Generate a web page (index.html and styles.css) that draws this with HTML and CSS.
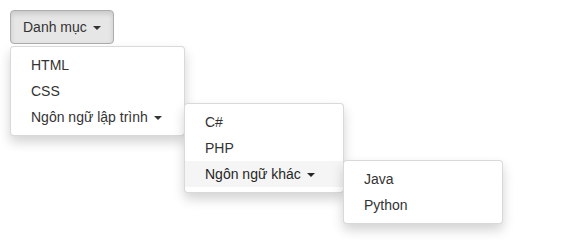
FILE: index.html
```html
<!DOCTYPE html>
<html lang="vi">
<head>
<meta charset="utf-8">
<title>Dropdown</title>
<link rel="stylesheet" href="styles.css">
</head>
<body>
<div class="page">
  <div class="dropdown">
    <button class="btn" type="button">Danh mục <span class="caret"></span></button>
    <ul class="menu menu-root">
      <li><a class="item">HTML</a></li>
      <li><a class="item">CSS</a></li>
      <li class="submenu">
        <a class="item">Ngôn ngữ lập trình <span class="caret"></span></a>
        <ul class="menu menu-sub">
          <li><a class="item">C#</a></li>
          <li><a class="item">PHP</a></li>
          <li class="submenu">
            <a class="item hover">Ngôn ngữ khác <span class="caret"></span></a>
            <ul class="menu menu-sub">
              <li><a class="item">Java</a></li>
              <li><a class="item">Python</a></li>
            </ul>
          </li>
        </ul>
      </li>
    </ul>
  </div>
</div>
</body>
</html>
```
FILE: styles.css
```css
* { box-sizing: border-box; }
html, body {
  margin: 0;
  background: #fff;
  font-family: "Liberation Sans", Arial, sans-serif;
  font-size: 14px;
  line-height: 1.42857143;
  color: #333;
}
html { height: 100%; }
body { min-height: 250px; }
.page {
  padding: 10px;
  min-height: 250px;
}
.dropdown {
  position: relative;
  display: inline-block;
}
.btn {
  display: inline-block;
  font: inherit;
  color: #333;
  padding: 6px 12px 6px 12px;
  line-height: 1.42857143;
  background: #e6e6e6;
  border: 1px solid #adadad;
  border-radius: 4px;
  box-shadow: inset 0 3px 5px rgba(0,0,0,0.125);
  cursor: pointer;
}
.caret {
  display: inline-block;
  width: 0;
  height: 0;
  margin-left: 2px;
  vertical-align: middle;
  border-top: 4px solid;
  border-right: 4px solid transparent;
  border-left: 4px solid transparent;
}
.menu {
  position: absolute;
  z-index: 10;
  list-style: none;
  margin: 2px 0 0;
  padding: 5px 0;
  min-width: 160px;
  background: #fff;
  border: 1px solid rgba(0,0,0,0.15);
  border-radius: 4px;
  box-shadow: 0 6px 12px rgba(0,0,0,0.175);
}
.menu-root {
  top: 100%;
  left: 0;
  min-width: 175px;
}
.submenu {
  position: relative;
}
.menu-sub {
  top: 0;
  left: 100%;
  margin-top: -1px;
}
.item {
  display: block;
  padding: 3px 20px;
  white-space: nowrap;
  color: #333;
  text-decoration: none;
}
.item.hover {
  background: #f5f5f5;
  color: #262626;
}
```
